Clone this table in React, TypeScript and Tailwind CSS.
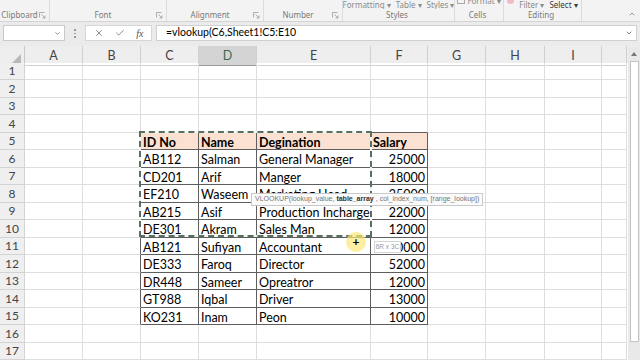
import clsx from 'clsx'
import { X, Check, ChevronDown, ChevronUp } from 'lucide-react'

const COLS = ['A', 'B', 'C', 'D', 'E', 'F', 'G', 'H', 'I', '']
const ROW_GRID = 'grid grid-cols-[25px_58px_58px_58px_58px_114px_57px_58px_59px_57px_25px]'

const DATA: Record<number, string[]> = {
  5: ['ID No', 'Name', 'Degination', 'Salary'],
  6: ['AB112', 'Salman', 'General Manager', '25000'],
  7: ['CD201', 'Arif', 'Manger', '18000'],
  8: ['EF210', 'Waseem', 'Marketing Head', '25000'],
  9: ['AB215', 'Asif', 'Production Incharge', '22000'],
  10: ['DE301', 'Akram', 'Sales Man', '12000'],
  11: ['AB121', 'Sufiyan', 'Accountant', '20000'],
  12: ['DE333', 'Faroq', 'Director', '52000'],
  13: ['DR448', 'Sameer', 'Opreatror', '12000'],
  14: ['GT988', 'Iqbal', 'Driver', '13000'],
  15: ['KO231', 'Inam', 'Peon', '10000'],
}

const ROWS = Array.from({ length: 17 }, (_, i) => i + 1)

function Launcher() {
  return (
    <svg width="7" height="7" viewBox="0 0 7 7" className="shrink-0">
      <path d="M0.5 0.5h5M0.5 0.5v5" stroke="#9a9a9a" strokeWidth="0.8" fill="none" />
      <path d="M2.5 2.5l3.5 3.5M6 3.5v2.5h-2.5" stroke="#9a9a9a" strokeWidth="0.8" fill="none" />
    </svg>
  )
}

function Group({ w, label, launcher, children }: { w: string; label: string; launcher?: boolean; children?: React.ReactNode }) {
  return (
    <div className={clsx('flex h-full flex-col border-r border-[#dcdcdc]', w)}>
      <div className="flex h-[9px] items-start justify-center gap-[5px] overflow-hidden whitespace-nowrap text-[8px] leading-[8px] text-[#8a8a8a]">
        {children}
      </div>
      <div className="flex h-[12px] items-center pr-[3px]">
        <span className="flex-1 text-center text-[8px] text-[#7a7a7a]">{label}</span>
        {launcher && <Launcher />}
      </div>
    </div>
  )
}

function Ribbon() {
  return (
    <div className="flex h-[22px] border-b border-[#d4d4d4] bg-[#f3f3f3] font-['Noto_Sans',sans-serif]">
      <Group w="w-[50px]" label="Clipboard" launcher>
        <span className="-mt-[5px] ml-[20px] h-[4px] w-[6px] rounded-b bg-[#d0d0d0]" />
      </Group>
      <Group w="w-[117px]" label="Font" launcher>
        <span className="-mt-[5px] h-[3px] w-[10px] bg-[#d8d8d8]" />
        <span className="-mt-[5px] h-[3px] w-[10px] bg-[#d8d8d8]" />
      </Group>
      <Group w="w-[97px]" label="Alignment" launcher>
        <span className="-mt-[5px] h-[3px] w-[10px] bg-[#d8d8d8]" />
      </Group>
      <Group w="w-[79px]" label="Number" launcher />
      <Group w="w-[112px]" label="Styles">
        <span className="mt-[1px]">Formatting ▾</span>
        <span className="mt-[1px]">Table ▾</span>
        <span className="mt-[1px]">Styles ▾</span>
      </Group>
      <Group w="w-[49px]" label="Cells">
        <span className="-mt-[3px] flex items-center gap-[2px]">
          <span className="h-[6px] w-[8px] border border-[#a8a8a8]" />
          Format ▾
        </span>
      </Group>
      <Group w="w-[78px]" label="Editing">
        <span className="-mt-[3px] h-[7px] w-[7px] rounded-full bg-[#f3b9c6]" />
        <span className="mt-[1px]">Filter ▾</span>
        <span className="mt-[1px] text-[#3a3a3a]">Select ▾</span>
      </Group>
      <div className="flex flex-1 items-end justify-end pb-[3px] pr-[4px]">
        <ChevronUp size={8} strokeWidth={2} color="#666" />
      </div>
    </div>
  )
}

function FormulaBar() {
  return (
    <div className="flex h-[25px] items-center bg-[#ebebeb] pl-[3px] pr-[3px] pb-[1px] font-['Noto_Sans',sans-serif]">
      <div className="flex h-[16px] w-[62px] items-center justify-end border border-[#cacaca] bg-white pr-[3px]">
        <ChevronDown size={7} strokeWidth={2.5} color="#666" />
      </div>
      <div className="flex w-[20px] flex-col items-center gap-[2px]">
        <span className="h-[1.5px] w-[1.5px] bg-[#9a9a9a]" />
        <span className="h-[1.5px] w-[1.5px] bg-[#9a9a9a]" />
        <span className="h-[1.5px] w-[1.5px] bg-[#9a9a9a]" />
      </div>
      <div className="flex h-[16px] w-[67px] items-center justify-around border border-[#d6d6d6] bg-white px-[2px]">
        <X size={10} strokeWidth={1.6} color="#555" />
        <Check size={10} strokeWidth={1.6} color="#555" />
        <span className="font-['Liberation_Serif',serif] text-[10px] italic text-[#555]">fx</span>
      </div>
      <div className="ml-[4px] flex h-[16px] flex-1 items-center justify-between border border-[#d0d0d0] bg-white pl-[9px] pr-[3px]">
        <span className="font-['Lato',sans-serif] text-[10.5px] text-black">=vlookup(C6,Sheet1!C5:E10</span>
        <ChevronDown size={8} strokeWidth={2.5} color="#666" />
      </div>
    </div>
  )
}

function Cell({ r, c }: { r: number; c: number }) {
  const inTable = r >= 5 && r <= 15 && c >= 2 && c <= 5
  const darkRight = inTable || (c === 1 && r >= 5 && r <= 15)
  const darkBottom = inTable || (r === 4 && c >= 2 && c <= 5)
  const value = inTable ? DATA[r][c - 2] : ''
  return (
    <div
      className={clsx(
        'h-[17.5px] overflow-hidden whitespace-nowrap border-r border-b px-[2px] leading-[19px]',
        darkRight ? 'border-r-[#5e5e5e]' : 'border-r-[#dedede]',
        darkBottom ? 'border-b-[#5e5e5e]' : 'border-b-[#dedede]',
        r === 5 && inTable && 'bg-[#fbe1d1] font-bold',
        c === 5 && r > 5 && 'text-right',
      )}
    >
      {value}
    </div>
  )
}

function Sheet() {
  return (
    <div className="relative flex-1 font-['Lato',sans-serif] text-[12.5px] text-black">
      <div className={clsx(ROW_GRID, 'h-[17px] bg-[#eeeeee] text-[12.5px] text-[#444]')}>
        <div className="flex items-end justify-end border-r border-b border-[#c8c8c8] pb-[2px] pr-[3px]">
          <svg width="9" height="9" viewBox="0 0 9 9">
            <path d="M9 0V9H0Z" fill="#b9b9b9" />
          </svg>
        </div>
        {COLS.map((c, i) => (
          <div
            key={i}
            className={clsx(
              'flex items-center justify-center border-r border-b border-[#d0d0d0] pt-[1px]',
              c === 'D' && 'bg-[#d4d4d4] text-[#3d6a4c] border-b-[#9a9a9a]',
            )}
          >
            {c}
          </div>
        ))}
      </div>
      {ROWS.map((r) => (
        <div key={r} className={ROW_GRID}>
          <div className="flex h-[17.5px] items-center justify-center border-r border-b border-[#d3d3d3] bg-[#efefef] pt-[1px] text-[12px] text-[#444]">
            {r}
          </div>
          {COLS.map((_, c) => (
            <Cell key={c} r={r} c={c} />
          ))}
        </div>
      ))}

      {/* copy/reference marquee around C5:E10 */}
      <div className="pointer-events-none absolute left-[139px] top-[85px] h-[106px] w-[233px] border-2 border-[#f4f4f4]" />
      <div className="pointer-events-none absolute left-[139px] top-[85px] h-[106px] w-[233px] border-2 border-dashed border-[#58705f]" />

      {/* function argument hint */}
      <div className="absolute left-[251px] top-[147px] flex h-[13px] items-center whitespace-nowrap border border-[#c9c9c9] bg-[#fafafa] px-[3px] font-['Liberation_Sans',sans-serif] text-[7px] text-[#777]">
        VLOOKUP(lookup_value, <b className="px-[2px] text-[#333]">table_array</b>, col_index_num, [range_lookup])
      </div>

      {/* pointer highlight */}
      <div className="absolute left-[346px] top-[186px] flex h-[20px] w-[20px] items-center justify-center rounded-full bg-[#fbe87a]/70">
        <span className="text-[12px] font-bold leading-none text-black">+</span>
      </div>

      {/* range size hint */}
      <div className="absolute left-[374px] top-[195px] flex h-[12px] w-[27px] items-center justify-center border border-[#d4d4d4] bg-white font-['Liberation_Sans',sans-serif] text-[6.5px] text-[#999]">
        6R x 3C
      </div>
    </div>
  )
}

function ScrollBar() {
  return (
    <div className="absolute right-0 top-[47px] flex h-[313px] w-[12px] flex-col items-center bg-[#e9e9e9]">
      <div className="flex h-[14px] items-center">
        <svg width="6" height="4" viewBox="0 0 6 4">
          <path d="M0 4L3 0L6 4Z" fill="#777" />
        </svg>
      </div>
      <div className="h-[281px] w-[9px] border border-[#c4c4c4] bg-white" />
    </div>
  )
}

export default function App() {
  return (
    <div className="relative flex h-[360px] w-[640px] flex-col overflow-hidden bg-white">
      <Ribbon />
      <FormulaBar />
      <Sheet />
      <ScrollBar />
    </div>
  )
}
